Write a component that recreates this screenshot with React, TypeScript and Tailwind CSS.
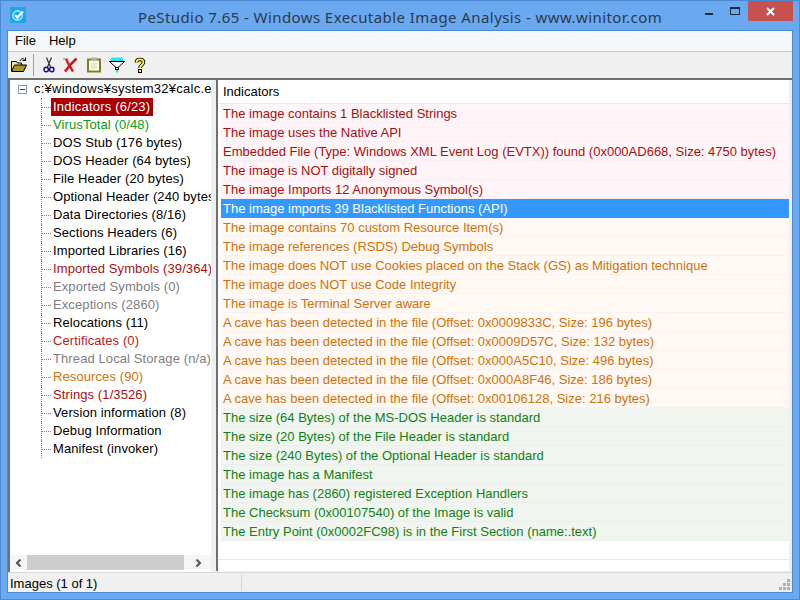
import React from "react";

const FONT = "font-['Liberation_Sans',sans-serif]";
const RED = "text-[#a80f0f]";
const ORANGE = "text-[#cf720c]";
const GREEN = "text-[#128012]";

const tree: [string, string][] = [
  ["Indicators (6/23)", "sel"],
  ["VirusTotal (0/48)", "text-[#0f9a0f]"],
  ["DOS Stub (176 bytes)", "text-black"],
  ["DOS Header (64 bytes)", "text-black"],
  ["File Header (20 bytes)", "text-black"],
  ["Optional Header (240 bytes)", "text-black"],
  ["Data Directories (8/16)", "text-black"],
  ["Sections Headers (6)", "text-black"],
  ["Imported Libraries (16)", "text-black"],
  ["Imported Symbols (39/364)", RED],
  ["Exported Symbols (0)", "text-[#808080]"],
  ["Exceptions (2860)", "text-[#808080]"],
  ["Relocations (11)", "text-black"],
  ["Certificates (0)", "text-[#c01818]"],
  ["Thread Local Storage (n/a)", "text-[#808080]"],
  ["Resources (90)", ORANGE],
  ["Strings (1/3526)", RED],
  ["Version information (8)", "text-black"],
  ["Debug Information", "text-black"],
  ["Manifest (invoker)", "text-black"],
];

const rows: [string, "r" | "o" | "g" | "s"][] = [
  ["The image contains 1 Blacklisted Strings", "r"],
  ["The image uses the Native API", "r"],
  ["Embedded File (Type: Windows XML Event Log (EVTX)) found (0x000AD668, Size: 4750 bytes)", "r"],
  ["The image is NOT digitally signed", "r"],
  ["The image Imports 12 Anonymous Symbol(s)", "r"],
  ["The image imports 39 Blacklisted Functions (API)", "s"],
  ["The image contains 70 custom Resource Item(s)", "o"],
  ["The image references (RSDS) Debug Symbols", "o"],
  ["The image does NOT use Cookies placed on the Stack (GS) as Mitigation technique", "o"],
  ["The image does NOT use Code Integrity", "o"],
  ["The image is Terminal Server aware", "o"],
  ["A cave has been detected in the file (Offset: 0x0009833C, Size: 196 bytes)", "o"],
  ["A cave has been detected in the file (Offset: 0x0009D57C, Size: 132 bytes)", "o"],
  ["A cave has been detected in the file (Offset: 0x000A5C10, Size: 496 bytes)", "o"],
  ["A cave has been detected in the file (Offset: 0x000A8F46, Size: 186 bytes)", "o"],
  ["A cave has been detected in the file (Offset: 0x00106128, Size: 216 bytes)", "o"],
  ["The size (64 Bytes) of the MS-DOS Header is standard", "g"],
  ["The size (20 Bytes) of the File Header is standard", "g"],
  ["The size (240 Bytes) of the Optional Header is standard", "g"],
  ["The image has a Manifest", "g"],
  ["The image has (2860) registered Exception Handlers", "g"],
  ["The Checksum (0x00107540) of the Image is valid", "g"],
  ["The Entry Point (0x0002FC98) is in the First Section (name:.text)", "g"],
];

const rowCls: Record<string, string> = {
  r: `bg-[#fff5f8] border-[#f8f0f6] ${RED}`,
  o: `bg-[#fff8f3] border-[#f8f2f0] ${ORANGE}`,
  g: `bg-[#f0f5f0] border-[#ebf0eb] ${GREEN}`,
  s: "bg-[#3399ff] border-[#3399ff] text-white",
};

function AppIcon() {
  return (
    <svg width="16" height="16" viewBox="0 0 16 16">
      <rect width="16" height="16" fill="#1ea7e8" />
      <circle cx="7.5" cy="8.5" r="4.6" fill="none" stroke="#a8e0f8" strokeWidth="1.6" />
      <path d="M5 8l2.4 2.6L13 4.5" stroke="#fff" strokeWidth="2.2" fill="none" />
    </svg>
  );
}

function Toolbar() {
  return (
    <div className="h-[28px] bg-[#f0f0f0] border-b-2 border-[#707070] flex items-center pl-[3px] shrink-0">
      <svg width="16" height="16" viewBox="0 0 16 16">
        <path d="M0.5 14V4.5h5l1 1.5h4v2" fill="#f4e8a0" stroke="#000" />
        <path d="M3.5 8h12l-3 6.5H0.5z" fill="#a89428" stroke="#000" />
        <path d="M9 4c1-2.5 3-3 4.5-1.5M14.5 0.5v3h-3" stroke="#000" fill="none" />
      </svg>
      <div className="w-[1px] h-[22px] bg-[#a0a0a0] ml-[6px] mr-[7px]" />
      <svg width="16" height="16" viewBox="0 0 16 16">
        <path d="M5.5 0.5l4 9.5M10.5 0.5L6.5 10" stroke="#303030" strokeWidth="1.2" fill="none" />
        <circle cx="5.2" cy="12.5" r="2.2" stroke="#101080" strokeWidth="1.4" fill="none" />
        <circle cx="10.8" cy="12.5" r="2.2" stroke="#101080" strokeWidth="1.4" fill="none" />
      </svg>
      <svg width="16" height="16" viewBox="0 0 16 16" className="ml-[5px]">
        <path d="M1 2h5" stroke="#a0a0a0" strokeWidth="1.4" />
        <path d="M4 2l3 6 4 6.5" stroke="#d81c1c" strokeWidth="2.4" fill="none" />
        <path d="M14.5 1.5L9 7 3 14.5" stroke="#c81818" strokeWidth="2.6" fill="none" />
      </svg>
      <svg width="16" height="16" viewBox="0 0 16 16" className="ml-[8px]">
        <rect x="2" y="2.5" width="12" height="12" fill="#fffff0" stroke="#80801a" strokeWidth="2" />
        <rect x="5" y="0.5" width="6" height="3.5" fill="#b0b0a0" />
        <path d="M5 7h6M5 9h6M5 11h6" stroke="#d0d0c0" />
      </svg>
      <svg width="16" height="16" viewBox="0 0 16 16" className="ml-[7px]">
        <path d="M2.5 0.5h11L15 4H1z" fill="#33e4ec" />
        <path d="M0.5 4.5h15L9 10.5H7z" fill="#fff" stroke="#000" />
        <path d="M6.5 10.5h3v2h-3z" fill="#fff" stroke="#000" />
        <path d="M7 13h2v2.5H7z" fill="#33e4ec" />
      </svg>
      <svg width="16" height="16" viewBox="0 0 16 16" className="ml-[7px]">
        <path d="M4.5 5.5C4.5 1.5 11.5 1.5 11.5 5c0 3-3.5 3-3.5 6" stroke="#000" strokeWidth="3.6" fill="none" />
        <path d="M4.5 5.5C4.5 1.5 11.5 1.5 11.5 5c0 3-3.5 3-3.5 6" stroke="#ffff30" strokeWidth="1.8" fill="none" />
        <rect x="6.5" y="12.5" width="3" height="3" fill="#ffff30" stroke="#000" />
      </svg>
    </div>
  );
}

function Chevron({ dir }: { dir: "l" | "r" }) {
  return (
    <svg width="8" height="8" viewBox="0 0 8 8">
      <path d={dir === "l" ? "M5.5 0.5L2 4l3.5 3.5" : "M2.5 0.5L6 4 2.5 7.5"} stroke="#505050" strokeWidth="2" fill="none" />
    </svg>
  );
}

export default function App() {
  return (
    <div className={`${FONT} w-[800px] h-[600px] bg-[#6aa8f0] border border-[#4a88d0] flex flex-col text-[13px] overflow-hidden`}>
      <div className="h-[29px] flex items-start shrink-0">
        <div className="pl-[9px] pt-[6px] shrink-0"><AppIcon /></div>
        <div className="flex-1 text-center text-[#2c3a4c] text-[15px] pl-[79px] pt-[6px] leading-[20px] tracking-[0.42px] font-['Noto_Sans',sans-serif] whitespace-nowrap">
          PeStudio 7.65 - Windows Executable Image Analysis - www.winitor.com
        </div>
        <div className="flex items-start shrink-0 mr-[6px]">
          <div className="w-[27px] h-[20px] flex items-start justify-center pt-[12px]">
            <div className="w-[8px] h-[2px] bg-[#1c2c40]" />
          </div>
          <div className="w-[26px] h-[20px] flex items-start justify-center pt-[6px]">
            <div className="w-[10px] h-[8px] border border-[#1c2c40] border-t-2" />
          </div>
          <div className="w-[45px] h-[20px] bg-[#c75050] flex items-center justify-center">
            <svg width="9" height="9" viewBox="0 0 9 9"><path d="M1 1l7 7M8 1L1 8" stroke="#fff" strokeWidth="2" /></svg>
          </div>
        </div>
      </div>
      <div className="mx-[6px] flex-1 flex flex-col bg-[#f0f0f0] min-h-0 border border-[#4a88d0]">
        <div className="h-[21px] bg-[#f5f6f7] border-b border-[#c8c8c8] flex items-center gap-[13px] pl-[7px] text-black shrink-0">
          <span>File</span>
          <span>Help</span>
        </div>
        <Toolbar />
        <div className="flex-1 flex min-h-0">
          <div className="w-[203px] shrink-0 bg-white border-l-2 border-[#707070] flex flex-col overflow-hidden">
            <div className="flex-1 overflow-hidden">
              <div className="h-[18px] flex items-center whitespace-nowrap pl-[8px]">
                <span className="w-[9px] h-[9px] border border-[#8a9aa8] flex items-center justify-center mr-[7px] shrink-0">
                  <span className="w-[5px] h-[1px] bg-[#304060]" />
                </span>
                <span className="text-black tracking-[0.25px]">c:¥windows¥system32¥calc.exe</span>
              </div>
              {tree.map(([t, c]) => (
                <div key={t} className="h-[18px] flex items-stretch whitespace-nowrap ml-[31px]">
                  <div className="w-[10px] shrink-0 border-l border-dotted border-[#808080] flex items-center">
                    <div className="w-full border-t border-dotted border-[#808080]" />
                  </div>
                  {c === "sel" ? (
                    <span className="bg-[#a80000] text-white pl-[2px] pr-[3px] leading-[18px] tracking-[0.2px]">{t}</span>
                  ) : (
                    <span className={`${c} px-[2px] leading-[18px] tracking-[0.1px]`}>{t}</span>
                  )}
                </div>
              ))}
            </div>
            <div className="h-[15px] bg-[#f6f6f6] flex items-center shrink-0 mb-[2px]">
              <div className="w-[17px] flex justify-center"><Chevron dir="l" /></div>
              <div className="w-[157px] h-full bg-[#cdcdcd]" />
              <div className="flex-1 flex justify-center"><Chevron dir="r" /></div>
            </div>
          </div>
          <div className="w-[5px] bg-[#f0f0f0] shrink-0" />
          <div className="flex-1 bg-white border-l-2 border-[#707070] flex flex-col min-w-0 overflow-hidden mr-[3px] mb-[1px]">
            <div className="h-[24px] border-b border-[#e8e8f4] flex items-center pl-[5px] pt-[1px] text-black shrink-0">Indicators</div>
            <div className="pl-[3px] flex-1">
              {rows.map(([t, k]) => (
                <div key={t} className={`h-[19px] leading-[19px] pl-[2px] border-b whitespace-nowrap ${rowCls[k]}`}>
                  {t}
                </div>
              ))}
            </div>
            <div className="h-[12px] border-t border-[#e8e8e8] shrink-0" />
          </div>
        </div>
        <div className="h-[20px] bg-[#f0f0f0] border-t border-[#d8d8d8] flex items-center shrink-0 text-black">
          <div className="w-[234px] h-[16px] pl-[2px] border-r border-[#d4d4d4] leading-[17px]">Images (1 of 1)</div>
          <div className="flex-1" />
          <svg width="12" height="12" viewBox="0 0 12 12" className="mr-[1px] mt-[4px]">
            <path d="M8 0h3v3H8zM4 4h3v3H4zM8 4h3v3H8zM0 8h3v3H0zM4 8h3v3H4zM8 8h3v3H8z" fill="#b0b0b0" />
          </svg>
        </div>
      </div>
      <div className="h-[6px] shrink-0" />
    </div>
  );
}
